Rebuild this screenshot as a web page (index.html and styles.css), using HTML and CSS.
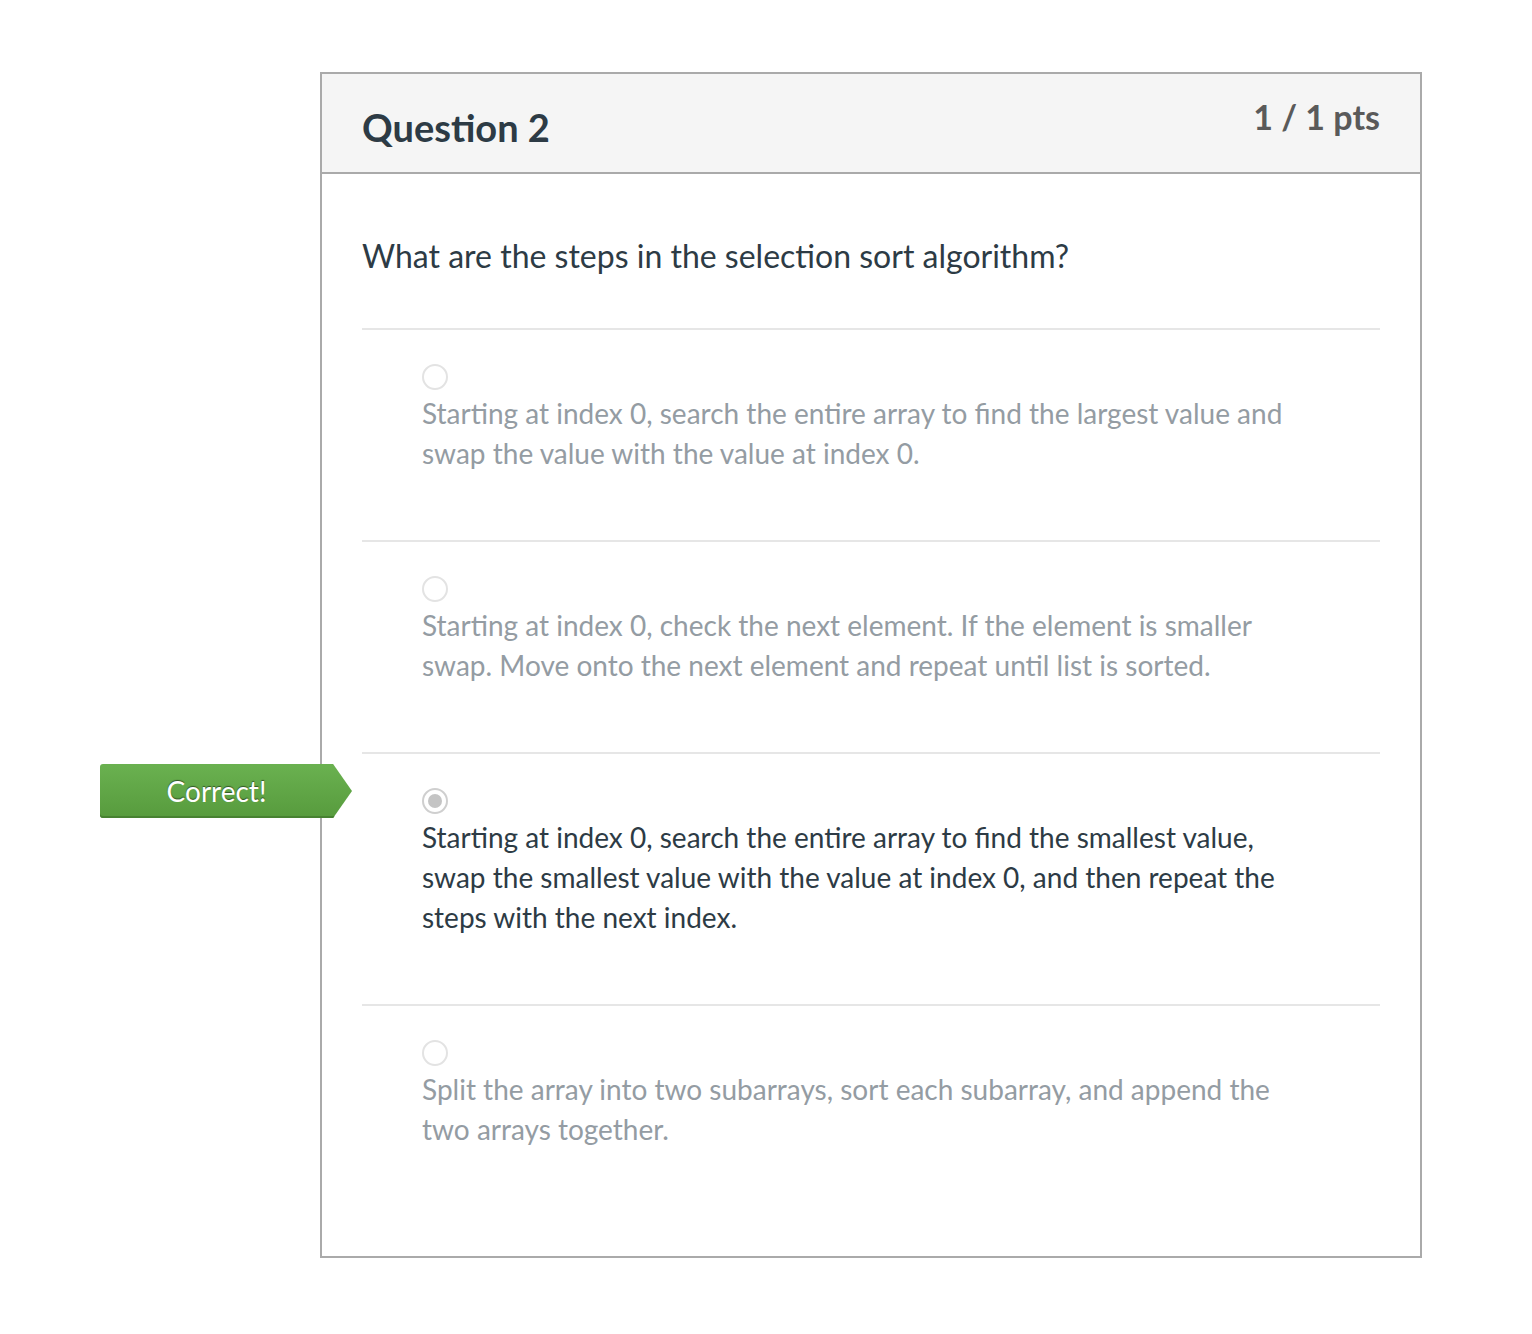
FILE: index.html
```html
<!DOCTYPE html>
<html>
<head>
<meta charset="utf-8">
<link rel="stylesheet" href="styles.css">
</head>
<body>
<div class="card">
  <div class="card-header">
    <h2 class="title">Question 2</h2>
    <div class="pts">1 / 1 pts</div>
  </div>
  <div class="card-body">
    <p class="question">What are the steps in the selection sort algorithm?</p>
    <div class="answer">
      <span class="radio"></span>
      <div class="answer-text">Starting at index 0, search the entire array to find the largest value and swap the value with the value at index 0.</div>
    </div>
    <div class="answer">
      <span class="radio"></span>
      <div class="answer-text">Starting at index 0, check the next element. If the element is smaller swap. Move onto the next element and repeat until list is sorted.</div>
    </div>
    <div class="answer selected">
      <div class="badge">Correct!</div>
      <span class="radio checked"></span>
      <div class="answer-text">Starting at index 0, search the entire array to find the smallest value, swap the smallest value with the value at index 0, and then repeat the steps with the next index.</div>
    </div>
    <div class="answer last">
      <span class="radio"></span>
      <div class="answer-text">Split the array into two subarrays, sort each subarray, and append the two arrays together.</div>
    </div>
  </div>
</div>
</body>
</html>
```
FILE: styles.css
```css
* { box-sizing: border-box; }
body {
  margin: 0;
  background: #fff;
  font-family: Lato, "Open Sans", sans-serif;
}
.card {
  margin: 72px 0 0 320px;
  width: 1102px;
  border: 2px solid #aaaaaa;
  background: #fff;
}
.card-header {
  display: flex;
  justify-content: space-between;
  align-items: flex-start;
  background: #f5f5f5;
  border-bottom: 2px solid #aaaaaa;
  height: 100px;
  padding: 0 40px;
}
.title {
  margin: 0;
  padding-top: 27px;
  font-size: 38px;
  line-height: 52px;
  font-weight: 700;
  color: #2d3b45;
}
.pts {
  padding-top: 21px;
  font-size: 34px;
  line-height: 44px;
  font-weight: 700;
  color: #5a5a5a;
}
.card-body {
  padding: 58px 40px 106px;
}
.question {
  margin: 0 0 48px;
  font-size: 32px;
  line-height: 48px;
  color: #2d3b45;
}
.answer {
  position: relative;
  border-top: 2px solid #e6e6e6;
  padding: 34px 0 67px 60px;
}
.answer.last { padding-bottom: 1px; }
.radio {
  display: block;
  width: 26px;
  height: 26px;
  border-radius: 50%;
  border: 2px solid #e3e3e3;
  background: #fff;
  margin-bottom: 3px;
}
.radio.checked {
  border-color: #cfcfcf;
  display: flex;
  align-items: center;
  justify-content: center;
}
.radio.checked::after {
  content: "";
  width: 14px;
  height: 14px;
  border-radius: 50%;
  background: #c4c4c4;
}
.answer-text {
  font-size: 28px;
  line-height: 40px;
  color: #949ca3;
  max-width: 900px;
}
.selected .answer-text { color: #2d3b45; }
.badge {
  position: absolute;
  left: -262px;
  top: 10px;
  width: 252px;
  height: 54px;
  padding-right: 19px;
  display: flex;
  align-items: center;
  justify-content: center;
  color: #fff;
  font-size: 28px;
  text-shadow: 0 -1px 1px rgba(0,0,0,0.5);
  background: linear-gradient(#6ab150, #579b3d);
  box-shadow: inset 0 -2px 0 #478231;
  border-radius: 3px 0 0 3px;
  clip-path: polygon(0 0, 92.5% 0, 100% 50%, 92.5% 100%, 0 100%);
}
```
